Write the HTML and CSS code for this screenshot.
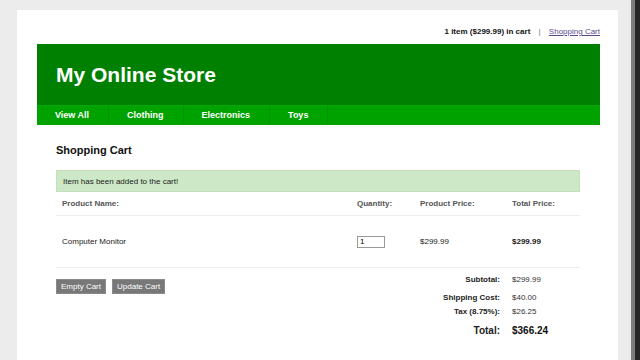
FILE: index.html
```html
<!DOCTYPE html>
<html>
<head>
  <title>My Online Store - Shopping Cart</title>
  <link rel="stylesheet" href="styles.css">
</head>
<body>
  <div class="screen">
    <div class="page">
      <div class="topbar">
        <b>1 item ($299.99) in cart</b>
        <span class="sep">|</span>
        <a href="#">Shopping Cart</a>
      </div>
      <div class="header">
        <h1>My Online Store</h1>
      </div>
      <ul class="nav">
        <li>View All</li>
        <li>Clothing</li>
        <li>Electronics</li>
        <li>Toys</li>
      </ul>

      <div class="content">
        <h2>Shopping Cart</h2>
        <div class="message">Item has been added to the cart!</div>

        <div class="cart-row cart-head">
          <div>Product Name:</div>
          <div>Quantity:</div>
          <div>Product Price:</div>
          <div>Total Price:</div>
        </div>
        <div class="cart-row cart-item">
          <div>Computer Monitor</div>
          <div><input type="text" class="qty" value="1"></div>
          <div>$299.99</div>
          <div class="strong">$299.99</div>
        </div>

        <div class="summary">
          <div class="actions">
            <button>Empty Cart</button>
            <button>Update Cart</button>
          </div>
          <div class="totals">
            <div class="total-row subtotal"><span class="label">Subtotal:</span><span class="value">$299.99</span></div>
            <div class="total-row shipping"><span class="label">Shipping Cost:</span><span class="value">$40.00</span></div>
            <div class="total-row tax"><span class="label">Tax (8.75%):</span><span class="value">$26.25</span></div>
            <div class="total-row grand"><span class="label">Total:</span><span class="value">$366.24</span></div>
          </div>
        </div>
      </div>
    </div>
  </div>
  <div class="edge"></div>
</body>
</html>
```

FILE: styles.css
```css
html, body {
  margin: 0;
  height: 360px;
  overflow: hidden;
}
body {
  display: flex;
  background-color: #ececec;
  font-family: "Liberation Sans", Arial, sans-serif;
  font-size: 8px;
  color: #1a1a1a;
}
.screen {
  width: 631px;
  padding: 10px 0 0 17px;
  box-sizing: border-box;
}
.edge {
  flex: 1;
  background: linear-gradient(to right, #7d7d7d 0, #7d7d7d 4px, #262626 4px);
}
.page {
  width: 601px;
  height: 350px;
  background-color: white;
  padding: 0 18px 0 20px;
  box-sizing: border-box;
}
.topbar {
  height: 34px;
  padding-top: 17px;
  box-sizing: border-box;
  line-height: 10px;
  text-align: right;
  color: #111;
}
.topbar .sep {
  color: #777;
  margin: 0 6px;
}
.topbar a {
  color: #5b4a8e;
}
.header {
  height: 61px;
  background-color: #008000;
  display: flex;
  align-items: center;
  padding-left: 19px;
}
.header h1 {
  margin: 0;
  font-size: 21px;
  color: white;
}
.nav {
  display: flex;
  margin: 0;
  padding: 0;
  list-style: none;
  height: 20px;
  background-color: #00a200;
  border-top: 1px solid #00aa00;
  box-sizing: border-box;
}
.nav li {
  padding: 0 19px 0 18px;
  line-height: 19px;
  font-size: 9px;
  font-weight: bold;
  color: white;
  border-right: 1px solid #009400;
}
.content {
  padding: 0 20px 0 19px;
}
h2 {
  margin: 18px 0 13px;
  font-size: 11px;
  line-height: 14px;
  color: #111;
}
.message {
  height: 22px;
  line-height: 22px;
  padding-left: 6px;
  background-color: #cde8c7;
  border: 1px solid #c3e0bb;
  box-sizing: border-box;
  color: #222;
}
.cart-row {
  display: grid;
  grid-template-columns: 295px 63px 92px 1fr;
  align-items: center;
  border-bottom: 1px solid #eeeeee;
}
.cart-row div {
  padding-left: 6px;
}
.cart-head {
  height: 23px;
  font-weight: bold;
  color: #555;
}
.cart-item {
  height: 51px;
  color: #222;
}
.strong {
  font-weight: bold;
}
.qty {
  width: 28px;
  height: 12px;
  padding: 0 2px;
  border: 1px solid #999;
  box-sizing: border-box;
  font-family: "Liberation Sans", Arial, sans-serif;
  font-size: 8px;
  margin: 0;
}
.summary {
  display: flex;
  padding-top: 7px;
}
.actions {
  width: 295px;
  display: flex;
  gap: 6px;
  align-items: flex-start;
  padding-top: 4px;
}
button {
  height: 15px;
  padding: 0 4px;
  background-color: #787878;
  color: white;
  border: 1px solid #8a8a8a;
  font-family: "Liberation Sans", Arial, sans-serif;
  font-size: 8px;
}
.total-row {
  display: flex;
  line-height: 10px;
}
.total-row .label {
  width: 155px;
  padding-right: 6px;
  box-sizing: border-box;
  text-align: right;
  font-weight: bold;
  color: #222;
}
.total-row .value {
  padding-left: 6px;
  color: #333;
}
.subtotal {
  margin-bottom: 8px;
}
.shipping {
  margin-bottom: 4px;
}
.grand {
  margin-top: 7px;
  line-height: 14px;
  font-size: 10px;
}
.grand .value {
  font-weight: bold;
  color: #111;
}
```
